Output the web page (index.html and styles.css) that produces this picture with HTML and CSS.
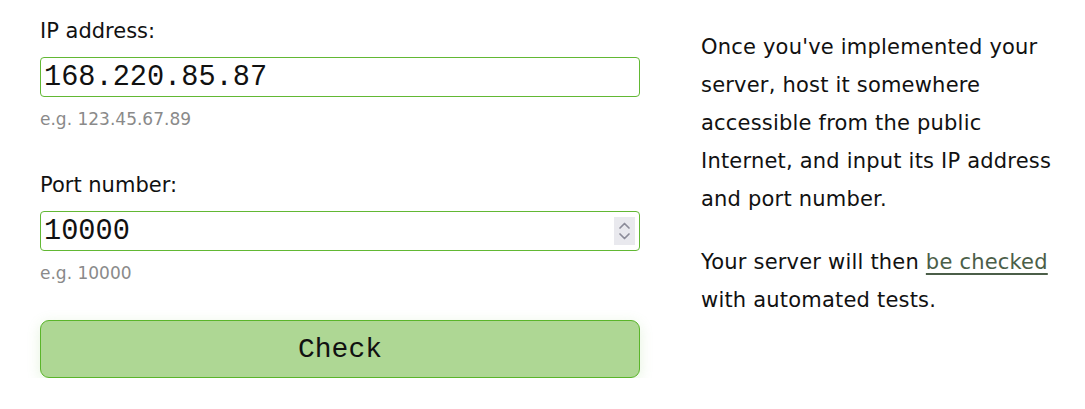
FILE: index.html
```html
<!DOCTYPE html>
<html lang="en">
<head>
<meta charset="utf-8">
<title>Check server</title>
<link rel="stylesheet" href="styles.css">
</head>
<body>
<main class="page">
  <form class="form">
    <div class="field">
      <label class="label" for="ip">IP address:</label>
      <input class="input" id="ip" type="text" value="168.220.85.87">
      <div class="hint">e.g. 123.45.67.89</div>
    </div>
    <div class="field">
      <label class="label" for="port">Port number:</label>
      <div class="number-wrap">
        <input class="input" id="port" type="number" value="10000">
        <span class="spinner" aria-hidden="true">
          <svg width="21" height="28" viewBox="0 0 21 28">
            <path d="M6 11 L10.5 6.5 L15 11" fill="none" stroke="#8c8c99" stroke-width="1.7" stroke-linecap="round" stroke-linejoin="round"/>
            <path d="M6 17 L10.5 21.5 L15 17" fill="none" stroke="#8c8c99" stroke-width="1.7" stroke-linecap="round" stroke-linejoin="round"/>
          </svg>
        </span>
      </div>
      <div class="hint">e.g. 10000</div>
    </div>
    <button class="button" type="button">Check</button>
  </form>
  <aside class="info">
    <p>Once you've implemented your server, host it somewhere accessible from the public Internet, and input its IP address and port number.</p>
    <p>Your server will then <a href="#">be checked</a> with automated tests.</p>
  </aside>
</main>
</body>
</html>
```

FILE: styles.css
```css
html, body {
  margin: 0;
  padding: 0;
  background: #ffffff;
}

body {
  font-family: "DejaVu Sans", "Noto Sans", sans-serif;
  color: #111111;
}

.page {
  display: flex;
  gap: 61px;
  padding: 16px 40px 0 40px;
}

.form {
  flex: none;
  width: 600px;
  display: flex;
  flex-direction: column;
}

.field {
  display: flex;
  flex-direction: column;
  margin-bottom: 39px;
}

.field + .button {
  margin-top: -4px;
}

.label {
  font-size: 21px;
  line-height: 30px;
  margin-bottom: 11px;
}

.number-wrap {
  position: relative;
}

.input {
  box-sizing: border-box;
  display: block;
  height: 40px;
  width: 100%;
  margin: 0;
  padding: 0 6px 0 3px;
  border: 1px solid #62b834;
  border-radius: 4px;
  font-family: "Liberation Mono", monospace;
  font-size: 28.6px;
  color: #111111;
  background: #ffffff;
  outline: none;
}

.input[type="number"] {
  -moz-appearance: textfield;
  appearance: textfield;
}

.input::-webkit-inner-spin-button,
.input::-webkit-outer-spin-button {
  -webkit-appearance: none;
  margin: 0;
}

.spinner {
  position: absolute;
  top: 6px;
  right: 5px;
  width: 21px;
  height: 28px;
  background: #e9e9ee;
  display: flex;
}

.hint {
  margin-top: 10px;
  font-size: 17px;
  line-height: 24px;
  color: #8a8a8a;
}

.button {
  box-sizing: border-box;
  height: 58px;
  width: 100%;
  border: 1px solid #5ab52a;
  border-radius: 9px;
  background: #aed794;
  font-family: "Liberation Mono", monospace;
  font-size: 28px;
  color: #111111;
  box-shadow: 0 3px 14px rgba(110, 190, 70, 0.18);
  cursor: pointer;
}

.info {
  flex: none;
  width: 362px;
  padding-top: 12px;
  font-size: 21px;
  letter-spacing: 0.2px;
  line-height: 38px;
}

.info p {
  margin: 0 0 25px 0;
}

.info a {
  color: #4b5e48;
  text-decoration: underline;
  text-underline-offset: 4px;
}
```
